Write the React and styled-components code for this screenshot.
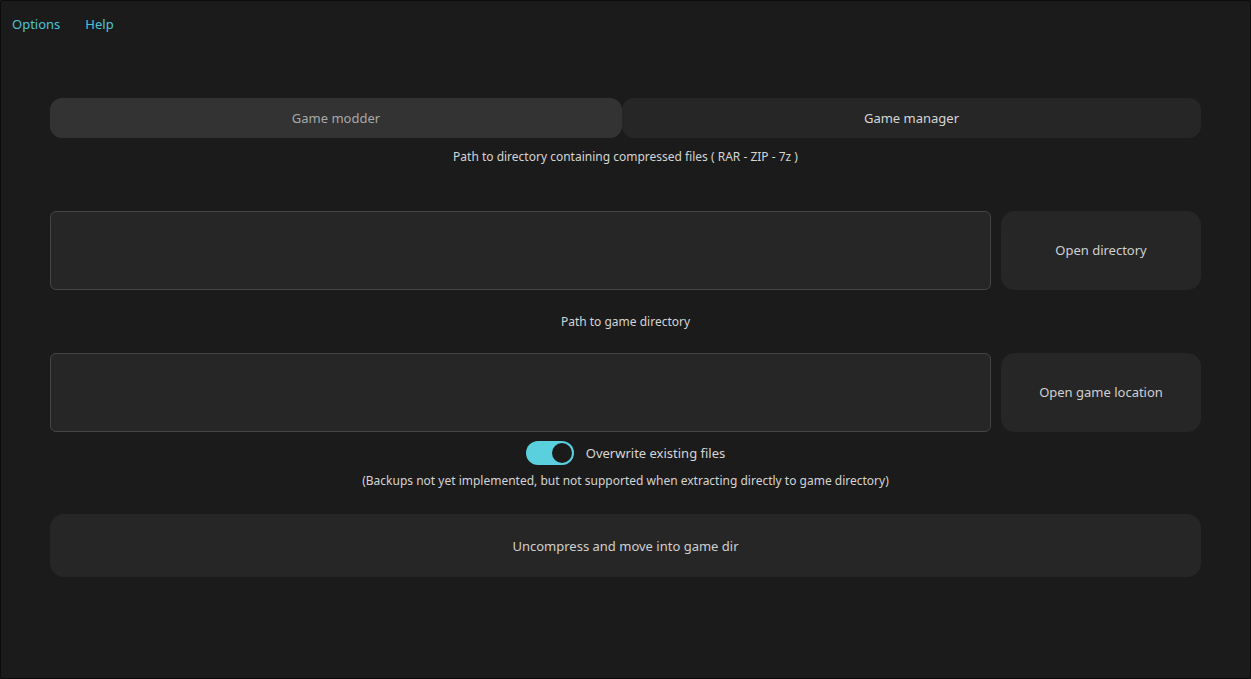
import React, { useState } from "react";
import styled, { createGlobalStyle } from "styled-components";

const Global = createGlobalStyle`
  html, body { margin: 0; padding: 0; background: #1b1b1b; }
  body { font-family: "Noto Sans", "Open Sans", sans-serif; }
  * { box-sizing: border-box; }
`;

const Window = styled.div`
  width: 1251px;
  height: 679px;
  border: 1px solid #0c0c0c;
  border-radius: 3px;
  background: #1b1b1b;
  display: flex;
  flex-direction: column;
  overflow: hidden;
`;

const MenuBar = styled.div`
  display: flex;
  align-items: center;
  gap: 25px;
  height: 46px;
  padding: 0 11px;
`;

const MenuItem = styled.span`
  color: #4fc3d6;
  font-size: 13px;
  cursor: default;
`;

const Main = styled.div`
  display: flex;
  flex-direction: column;
  padding: 0 49px;
  margin-top: 51px;
`;

const Tabs = styled.div`
  display: flex;
  height: 40px;
`;

const Tab = styled.button`
  border: none;
  border-radius: 12px;
  font-family: inherit;
  font-size: 13px;
  background: ${(p) => (p.$active ? "#333333" : "#262626")};
  color: ${(p) => (p.$active ? "#a8a8a8" : "#d6d6d6")};
  flex: ${(p) => (p.$active ? "0 0 572px" : "1 1 auto")};
  padding: 0;
`;

const Caption = styled.div`
  text-align: center;
  color: #d4d4d4;
  font-size: 12px;
  line-height: 16px;
  margin-top: ${(p) => p.$mt}px;
`;

const Row = styled.div`
  display: flex;
  gap: 10px;
  height: 79px;
  margin-top: ${(p) => p.$mt}px;
`;

const PathInput = styled.input`
  flex: 1 1 auto;
  background: #262626;
  border: 1px solid #454545;
  border-radius: 6px;
  color: #ddd;
  font-family: inherit;
  font-size: 13px;
  padding: 0 12px;
  outline: none;
`;

const SideButton = styled.button`
  flex: 0 0 200px;
  background: #262626;
  border: none;
  border-radius: 14px;
  color: #d0d0d0;
  font-family: inherit;
  font-size: 13px;
  padding-bottom: 2px;
`;

const ToggleRow = styled.div`
  display: flex;
  justify-content: center;
  align-items: center;
  gap: 12px;
  margin-top: 9px;
  height: 24px;
`;

const Track = styled.div`
  width: 48px;
  height: 24px;
  border-radius: 12px;
  background: ${(p) => (p.$on ? "#5acfde" : "#444")};
  display: flex;
  align-items: center;
  justify-content: ${(p) => (p.$on ? "flex-end" : "flex-start")};
  padding: 0 2px;
  cursor: pointer;
`;

const Knob = styled.div`
  width: 20px;
  height: 20px;
  border-radius: 50%;
  background: #1b1b1b;
`;

const ToggleLabel = styled.span`
  color: #d6d6d6;
  font-size: 13px;
`;

const BigButton = styled.button`
  height: 63px;
  margin-top: 25px;
  background: #262626;
  border: none;
  border-radius: 14px;
  color: #d0d0d0;
  font-family: inherit;
  font-size: 13px;
`;

export default function App() {
  const [tab, setTab] = useState(0);
  const [on, setOn] = useState(true);
  return (
    <>
      <Global />
      <Window>
        <MenuBar>
          <MenuItem>Options</MenuItem>
          <MenuItem>Help</MenuItem>
        </MenuBar>
        <Main>
          <Tabs>
            <Tab $active={tab === 0} onClick={() => setTab(0)}>Game modder</Tab>
            <Tab $active={tab === 1} onClick={() => setTab(1)}>Game manager</Tab>
          </Tabs>
          <Caption $mt={11}>Path to directory containing compressed files ( RAR - ZIP - 7z )</Caption>
          <Row $mt={46}>
            <PathInput />
            <SideButton>Open directory</SideButton>
          </Row>
          <Caption $mt={24}>Path to game directory</Caption>
          <Row $mt={23}>
            <PathInput />
            <SideButton>Open game location</SideButton>
          </Row>
          <ToggleRow>
            <Track $on={on} onClick={() => setOn(!on)}>
              <Knob />
            </Track>
            <ToggleLabel>Overwrite existing files</ToggleLabel>
          </ToggleRow>
          <Caption $mt={8}>
            (Backups not yet implemented, but not supported when extracting directly to game directory)
          </Caption>
          <BigButton>Uncompress and move into game dir</BigButton>
        </Main>
      </Window>
    </>
  );
}
